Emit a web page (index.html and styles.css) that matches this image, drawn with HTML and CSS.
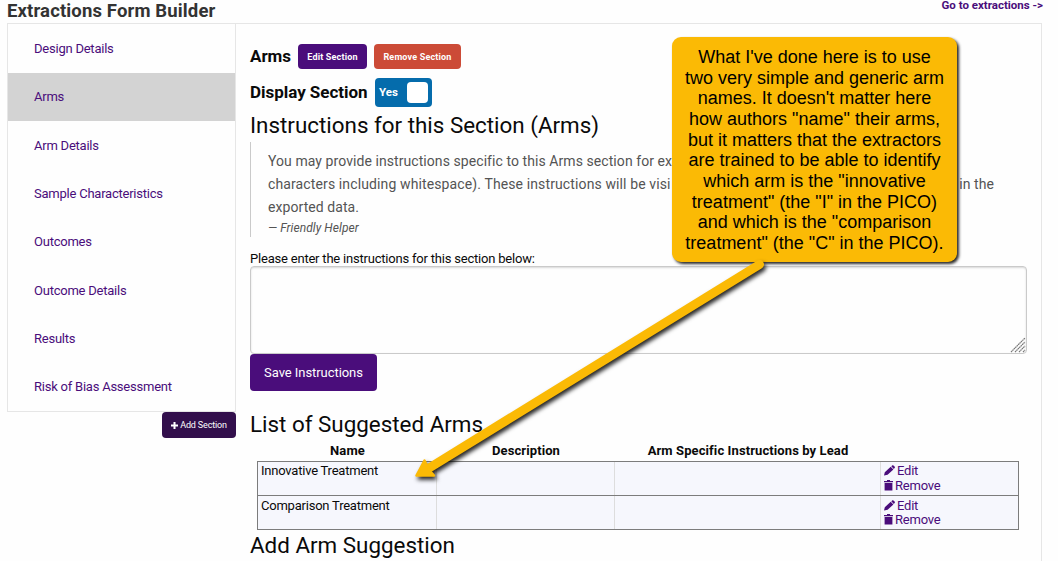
FILE: index.html
```html
<!DOCTYPE html>
<html lang="en">
<head>
<meta charset="utf-8">
<title>Extractions Form Builder</title>
<link rel="stylesheet" href="styles.css">
</head>
<body>
<svg class="defs" width="0" height="0">
  <symbol id="pencil" viewBox="0 0 11 11"><path d="M0 10.500 .8 7.3 6.7 1.8 9.4 4.5 3.6 9.800ZM7.3 1.2 8.4.2Q9 0 9.5.4L10.8 1.7Q11.1 2.3 10.6 2.9L9.8 3.9Z"/></symbol>
  <symbol id="trash" viewBox="0 0 9 11"><path d="M0 1H3V0H6V1H9V2.2H0ZM.6 3H8.4V10.500H.6Z"/></symbol>
</svg>
<header class="top">
  <h1 class="title">Extractions Form Builder</h1>
  <a class="goto">Go to extractions -&gt;</a>
</header>
<main class="layout">
  <aside class="side">
    <nav class="tabs">
      <a class="tab">Design Details</a>
      <a class="tab active">Arms</a>
      <a class="tab">Arm Details</a>
      <a class="tab">Sample Characteristics</a>
      <a class="tab">Outcomes</a>
      <a class="tab">Outcome Details</a>
      <a class="tab">Results</a>
      <a class="tab">Risk of Bias Assessment</a>
    </nav>
    <button class="add"><svg width="7" height="7" viewBox="0 0 7 7"><path d="M2.5 0H4.5V2.5H7V4.5H4.5V7H2.5V4.5H0V2.5H2.5Z" fill="#fff"/></svg><span>Add Section</span></button>
  </aside>
  <section class="panel">
    <div class="row row-arms"><b class="label arms">Arms</b><button class="small">Edit Section</button><button class="small alert">Remove Section</button></div>
    <div class="row row-display"><b class="label">Display Section</b><div class="switch"><span>Yes</span><i class="paddle"></i></div></div>
    <h2 class="heading h-instr"><span>Instructions for this Section (Arms)</span></h2>
    <blockquote class="quote">
      <div>You may provide instructions specific to this Arms section for ex</div>
      <div class="split"><span class="lead">characters including whitespace). These instructions will be visi</span><span>in the</span></div>
      <div>exported data.</div>
      <cite>— Friendly Helper</cite>
    </blockquote>
    <label class="prompt"><span>Please enter the instructions for this section below:</span></label>
    <div class="textarea"><svg width="16" height="16" viewBox="0 0 16 16" stroke="#777" stroke-width="1.2"><path d="M1 15 15 1M5 15 15 5M9 15 15 9M13 15 15 13" stroke-dasharray="1.6 .4"/></svg></div>
    <button class="save">Save Instructions</button>
    <h2 class="heading h-list"><span>List of Suggested Arms</span></h2>
    <div class="table">
      <div class="tr head"><b>Name</b><b>Description</b><b>Arm Specific Instructions by Lead</b><b></b></div>
      <div class="tr body first"><div>Innovative Treatment</div><div></div><div></div>
        <div class="acts"><a><svg width="11" height="11"><use href="#pencil"/></svg><span>Edit</span></a><a class="rm"><svg width="9" height="11"><use href="#trash"/></svg><span>Remove</span></a></div></div>
      <div class="tr body"><div>Comparison Treatment</div><div></div><div></div>
        <div class="acts"><a><svg width="11" height="11"><use href="#pencil"/></svg><span>Edit</span></a><a class="rm"><svg width="9" height="11"><use href="#trash"/></svg><span>Remove</span></a></div></div>
    </div>
    <h2 class="heading h-add"><span>Add Arm Suggestion</span></h2>
  </section>
</main>
<div class="callout">What I've done here is to use<br>two very simple and generic arm<br>names. It doesn't matter here<br>how authors "name" their arms,<br>but it matters that the extractors<br>are trained to be able to identify<br>which arm is the "innovative<br>treatment" (the "I" in the PICO)<br>and which is the "comparison<br>treatment" (the "C" in the PICO).</div>
<svg class="arrow" width="1058" height="561" viewBox="0 0 1058 561" fill="#fbba05" stroke="#fbba05" stroke-linejoin="round" stroke-linecap="round">
  <path d="M430 467.500 759.500 264.500" stroke-width="9"/>
  <path d="M416.500 475.500 424.500 460.500 427 465.500 430 471 434 475.500Z" stroke-width="2.500"/>
</svg>
</body>
</html>
```
FILE: styles.css
```css
* { box-sizing: border-box; }
body { margin: 0; width: 1058px; height: 561px; overflow: hidden; background: #fefefe; color: #0a0a0a; font: 13px/15px Roboto, sans-serif; white-space: nowrap; }
.defs { position: absolute; }
h1, h2, blockquote { margin: 0; }
button { border: 0; padding: 0; font-family: inherit; color: #fefefe; background: #4a0d7b; border-radius: 4px; }
a { color: #4a0d7b; }
.top { display: flex; justify-content: space-between; height: 23px; padding: 0 15px 0 7px; }
.title { font-size: 18.5px; letter-spacing: .14px; line-height: 22px; font-weight: 700; color: #333; }
.goto { font-size: 11.5px; line-height: 10px; font-weight: 700; }
.layout { display: flex; width: 1035px; height: 560px; margin-left: 7px; border: 1px solid #e6e6e6; border-bottom: 0; border-left: 0; }
.side { width: 229px; flex: none; display: flex; flex-direction: column; align-items: flex-end; }
.tabs { width: 229px; height: 388px; border: 1px solid #e6e6e6; border-top: 0; display: grid; grid-template-rows: 49px 48px 49px 47px 49px 49px 47px 1fr; letter-spacing: -.23px; }
.tab { display: flex; align-items: center; padding: 0 0 1px 26px; }
.active { background: #d3d3d3; }
.add { width: 74px; height: 26px; font-size: 9px; letter-spacing: -.15px; background: #320f4c; display: flex; align-items: center; justify-content: center; gap: 2px; }
.panel { width: 805px; padding: 20px 14px 0 14px; display: flex; flex-direction: column; align-items: flex-start; }
.row { display: flex; align-items: center; }
.row-arms { height: 25px; }
.label { font-size: 17px; letter-spacing: -.03px; font-weight: 700; line-height: 20px; width: 125px; padding-bottom: 2px; }
.label.arms { width: 48px; }
.small { width: 69px; height: 25px; font-size: 9px; letter-spacing: .18px; font-weight: 700; }
.alert { width: 87px; margin-left: 7px; background: #cc4b37; }
.row-display { height: 29px; margin-top: 9px; }
.switch { width: 57px; height: 29px; border-radius: 4px; background: #056cac; color: #fff; font-size: 11.5px; font-weight: 700; display: flex; align-items: center; justify-content: space-between; padding: 0 4px; }
.paddle { width: 21px; height: 21px; background: #fff; border-radius: 4px; }
.heading { font-size: 22.4px; font-weight: 400; line-height: 30px; height: 30px; }
.h-instr { margin-top: 3px; }
.quote { width: 777px; height: 95px; margin-top: 2px; padding: 8px 0 0 17px; border-left: 1px solid #cacaca; color: #545454; font-size: 14px; letter-spacing: .07px; line-height: 23px; }
.split { display: flex; justify-content: space-between; width: 726px; }
.lead { letter-spacing: .12px; }
.quote cite { display: block; font-size: 12px; line-height: 18px; }
.prompt { margin-top: 14px; height: 15px; letter-spacing: -.205px; }
.textarea { width: 777px; height: 88px; border: 1px solid #cacaca; border-radius: 4px; box-shadow: inset 0 1px 2px rgba(10,10,10,.15); display: flex; justify-content: flex-end; align-items: flex-end; }
.save { width: 127px; height: 37px; font-size: 13px; letter-spacing: -.06px; }
.h-list { margin-top: 18px; }
.table { width: 762px; margin: 3px 0 0 7px; }
.tr { display: grid; grid-template-columns: 179px 178px 266px 1fr; }
.head { height: 19px; text-align: center; line-height: 17px; letter-spacing: .1px; padding-left: 1px; }
.body { height: 34px; border: 1px solid #7c7c7c; border-top: 0; background: #f6f7fd; letter-spacing: -.22px; }
.body.first { height: 35px; border-top: 1px solid #7c7c7c; }
.body > div { padding: 2px 3px; border-right: 1px solid #ddd; }
.body.first > div { padding-top: 1px; }
.body > div:last-child { border: 0; }
.acts a { display: flex; gap: 2px; height: 15px; align-items: center; }
.body:not(.first) .rm { height: 13px; }
.acts svg { fill: #4a0d7b; }
.h-add { margin-top: 0; }
.arrow { position: absolute; left: 0; top: 0; filter: drop-shadow(2px 3px 2px rgba(0,0,0,.85)); }
.callout { position: absolute; left: 672px; top: 37px; width: 285px; height: 225px; padding-top: 10px; border-radius: 9px; background: #fbba05; box-shadow: 2px 2px 3px rgba(0,0,0,.85); color: #000; text-align: center; font: 18px/20.65px "Liberation Sans", sans-serif; }
```
